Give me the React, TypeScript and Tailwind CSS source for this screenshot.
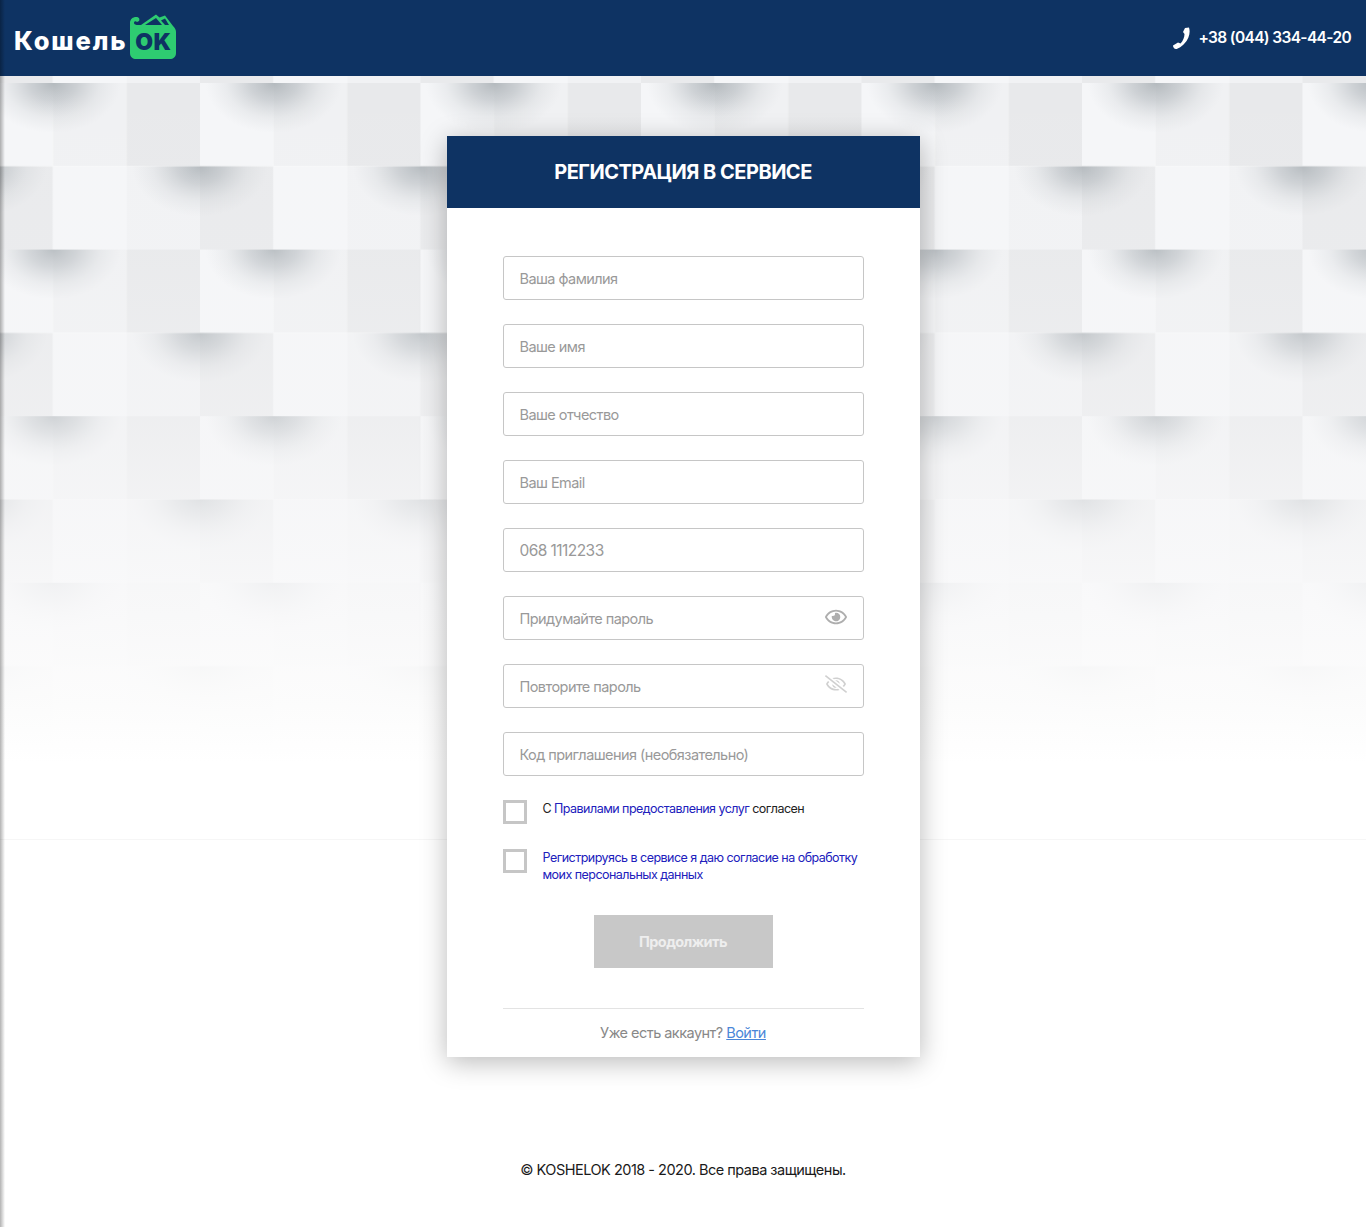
import { FaRegEye, FaRegEyeSlash } from "react-icons/fa";

const fields = [
  { placeholder: "Ваша фамилия" },
  { placeholder: "Ваше имя" },
  { placeholder: "Ваше отчество" },
  { placeholder: "Ваш Email" },
  { placeholder: "068 1112233", big: true },
  { placeholder: "Придумайте пароль", eye: "open" },
  { placeholder: "Повторите пароль", eye: "closed" },
  { placeholder: "Код приглашения (необязательно)" },
];

function Background() {
  return (
    <svg className="absolute left-0 top-[76px] w-full h-[764px]" viewBox="0 0 1366 764" preserveAspectRatio="none">
      <defs>
        <radialGradient id="shade">
          <stop offset="0" stopColor="#a4abb0" stopOpacity="0.8" />
          <stop offset="0.35" stopColor="#aeb4b9" stopOpacity="0.55" />
          <stop offset="0.7" stopColor="#bcc1c5" stopOpacity="0.2" />
          <stop offset="1" stopColor="#c4c8cc" stopOpacity="0" />
        </radialGradient>
        <linearGradient id="fade" x1="0" y1="0" x2="0" y2="1">
          <stop offset="0" stopColor="#f6f6f7" stopOpacity="0" />
          <stop offset="0.22" stopColor="#f6f6f7" stopOpacity="0.1" />
          <stop offset="0.44" stopColor="#f6f6f7" stopOpacity="0.4" />
          <stop offset="0.56" stopColor="#f7f7f8" stopOpacity="0.68" />
          <stop offset="0.67" stopColor="#f9f9fa" stopOpacity="0.88" />
          <stop offset="0.82" stopColor="#fcfcfc" stopOpacity="0.97" />
          <stop offset="0.9" stopColor="#ffffff" stopOpacity="1" />
        </linearGradient>
        <clipPath id="rowA">
          <rect x="0" y="0" width="220.5" height="83.3" />
        </clipPath>
        <clipPath id="rowB">
          <rect x="0" y="83.3" width="220.5" height="83.3" />
        </clipPath>
        <pattern id="tiles" patternUnits="userSpaceOnUse" x="-20.5" y="7" width="220.5" height="166.6">
          <rect x="0" y="0" width="73.5" height="83.3" fill="#f5f6f8" />
          <rect x="73.5" y="0" width="73.5" height="83.3" fill="#f0f1f3" />
          <rect x="147" y="0" width="73.5" height="83.3" fill="#e8e9eb" />
          <rect x="0" y="83.3" width="73.5" height="83.3" fill="#e9eaec" />
          <rect x="73.5" y="83.3" width="73.5" height="83.3" fill="#f5f6f8" />
          <rect x="147" y="83.3" width="73.5" height="83.3" fill="#f1f2f4" />
          <g clipPath="url(#rowA)">
            <ellipse cx="73.5" cy="0" rx="68" ry="50" fill="url(#shade)" />
          </g>
          <g clipPath="url(#rowB)">
            <ellipse cx="220.5" cy="83.3" rx="68" ry="50" fill="url(#shade)" />
            <ellipse cx="0" cy="83.3" rx="68" ry="50" fill="url(#shade)" />
          </g>
        </pattern>
      </defs>
      <rect width="1366" height="764" fill="url(#tiles)" />
      <rect width="1366" height="764" fill="url(#fade)" />
      <rect y="763" width="1366" height="1" fill="#f6f6f6" />
    </svg>
  );
}

function Logo() {
  return (
    <div className="flex items-end">
      <span className="font-['Inter'] text-[25.500px] leading-[34px] font-extrabold tracking-[1.85px] text-white mb-[1px]">Кошель</span>
      <div className="relative w-[46px] h-[45px] ml-[3px]">
        <svg viewBox="0 0 46 45" className="w-full h-full">
          <path
            d="M0 9C0 5 3 3 6 3c3 0 4 2 3 4L7 8C6 7 4 7 4 9c0 1.500 2 2 4 2h3L26 0.500l3.500 3L35 1.500 43 12c2 2 3 4 3 6v21c0 4-3 6-6 6H6c-3 0-6-2-6-6Z"
            fill="#2ecc71"
          />
          <path d="M15 11 26 4l6 7Z" fill="#0e3363" />
          <path d="M31 6.500 35 4.500 39 11H35Z" fill="#0e3363" />
        </svg>
        <span className="absolute left-0 right-0 top-[15px] text-center font-['Inter'] text-[23px] leading-[26px] font-black tracking-[0.6px] text-[#0e3363]">OK</span>
      </div>
    </div>
  );
}

function Field({ placeholder, big, eye }: { placeholder: string; big?: boolean; eye?: string }) {
  return (
    <div className="relative">
      <input
        readOnly
        placeholder={placeholder}
        className={`block w-full h-[44px] border border-[#c6c6c6] rounded-[3px] bg-white pl-[16px] pr-[40px] font-['Inter'] tracking-[-0.56px] outline-none placeholder:text-[#999999] ${big ? "text-[15.500px]" : "text-[14.500px]"}`}
      />
      {eye === "open" && <FaRegEye className="absolute right-[17px] top-[10px] text-[22px] text-[#aeaeae]" />}
      {eye === "closed" && <FaRegEyeSlash className="absolute right-[17px] top-[9px] text-[22px] text-[#d0d0d0]" />}
    </div>
  );
}

export default function App() {
  return (
    <div className="relative min-h-[1227px] bg-white font-['Inter',sans-serif] text-black overflow-hidden">
      <Background />
      <div className="absolute left-0 top-0 bottom-0 w-[5px] z-20 bg-gradient-to-r from-black/30 to-transparent" />

      <header className="relative h-[76px] bg-[#0e3363] flex items-center justify-between pl-[14px] pr-[15px]">
        <div className="-mt-[3px]">
          <Logo />
        </div>
        <a className="flex items-center gap-[8px] text-white font-semibold text-[15.500px] tracking-[-0.65px]">
          <svg viewBox="0 0 17 22" className="w-[17px] h-[22px]" fill="currentColor">
            <path d="M12 1 16 0.500C17.500 5 16.500 12 11 17 8.500 19.500 5 22 3 22 1 22 0 20 0 18.500L5 15.500 7.500 16.500C10 14 11.500 10 11.500 7L10 5Z" />
          </svg>
          +38 (044) 334-44-20
        </a>
      </header>

      <main className="relative flex flex-col items-center pt-[60px]">
        <section className="w-[473px] bg-white shadow-[0_5px_25px_rgba(0,0,0,0.28)]">
          <div className="h-[72px] bg-[#0e3363] flex items-center justify-center">
            <h1 className="text-white text-[20px] font-bold tracking-[-0.5px] uppercase">Регистрация в сервисе</h1>
          </div>
          <form className="px-[56px] pt-[48px] pb-[15px]">
            <div className="flex flex-col gap-[24px]">
              {fields.map((f) => (
                <Field key={f.placeholder} {...f} />
              ))}
            </div>

            <div className="flex gap-[16px] mt-[24px]">
              <span className="w-[24px] h-[24px] shrink-0 border-[3px] border-[#c6c6c6]" />
              <p className="text-[12.500px] leading-[17px] tracking-[-0.53px] text-[#222]">
                С <a className="text-[#2020bc]">Правилами предоставления услуг</a> согласен
              </p>
            </div>
            <div className="flex gap-[16px] mt-[25px]">
              <span className="w-[24px] h-[24px] shrink-0 border-[3px] border-[#c6c6c6]" />
              <p className="text-[12.500px] leading-[17px] tracking-[-0.53px] text-[#2020bc]">
                Регистрируясь в сервисе я даю согласие на обработку моих персональных данных
              </p>
            </div>

            <button type="button" className="block mx-auto mt-[32px] w-[179px] h-[53px] bg-[#c8c8c8] text-[#eeeeee] font-bold text-[14.500px] tracking-[-0.6px]">
              Продолжить
            </button>

            <div className="mt-[40px] border-t border-[#e3e3e3] pt-[15px] text-center text-[14.500px] leading-[18px] tracking-[-0.53px] text-[#888888]">
              Уже есть аккаунт? <a className="text-[#4a86d8] underline">Войти</a>
            </div>
          </form>
        </section>

        <footer className="mt-[104px] text-center text-[14.500px] leading-[18px] tracking-[-0.5px] text-[#1a1a1a]">© KOSHELOK 2018 - 2020. Все права защищены.</footer>
      </main>
    </div>
  );
}
